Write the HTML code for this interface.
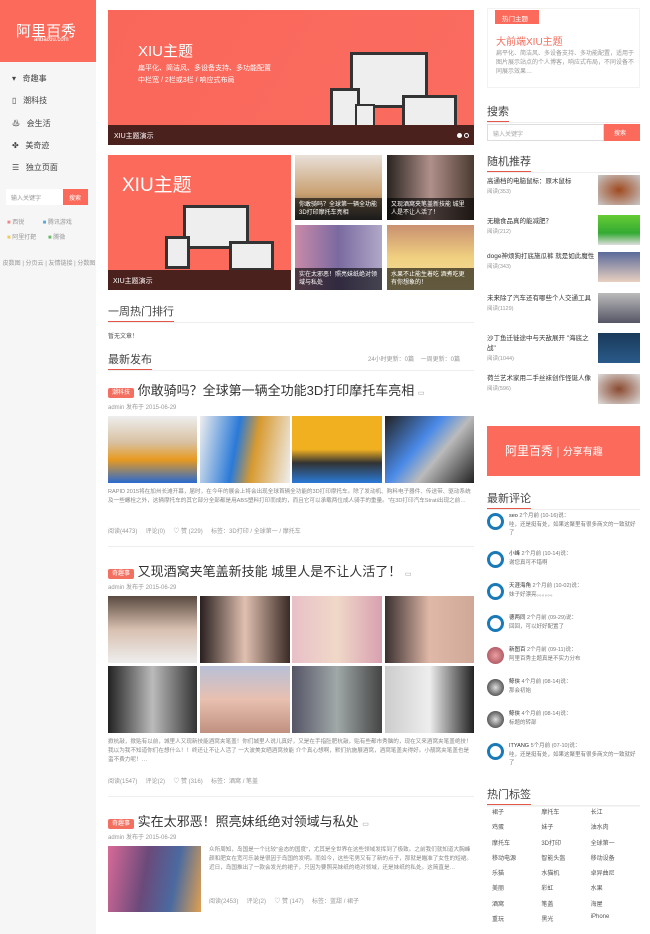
<!DOCTYPE html>
<html><head><meta charset="utf-8"><style>
*{margin:0;padding:0;box-sizing:border-box}
body{width:650px;height:934px;overflow:hidden;background:#fff;font-family:"Liberation Sans","Noto Sans CJK SC",sans-serif;color:#333;position:relative}
.a{position:absolute}
.red{background:#fb6a5b}
.s{font-size:7px;color:#999}
.t{font-size:13px;color:#333}
.h{font-size:11px;color:#444}
.ul{border-bottom:1px solid #eee}
.ul span{display:inline-block;border-bottom:1px solid #e4554a;padding-bottom:2px}
.tag{background:#f36f5f;color:#fff;font-size:6px;padding:2px 4px;border-radius:2px;vertical-align:middle}
.img{position:absolute}
</style></head><body>
<!-- left sidebar -->
<div class="a" style="left:0;top:0;width:96px;height:934px;background:#f6f6f6"></div>
<div class="a red" style="left:0;top:0;width:96px;height:62px"></div>
<div class="a" style="left:16px;top:20px;color:#fff;font-size:15px;letter-spacing:0">阿里百秀</div>
<div class="a" style="left:34px;top:37px;color:#fff;font-size:6px">alibaixiu.com</div>
<div class="a" style="left:12px;top:68px;font-size:8px;color:#444;line-height:22.3px">
<div>▾&nbsp;&nbsp;&nbsp;奇趣事</div><div>▯&nbsp;&nbsp;&nbsp;潮科技</div><div>♨&nbsp;&nbsp;&nbsp;会生活</div><div>✤&nbsp;&nbsp;&nbsp;美奇迹</div><div>☰&nbsp;&nbsp;&nbsp;独立页面</div></div>
<div class="a" style="left:6px;top:189px;width:57px;height:16px;background:#fff;font-size:6px;color:#999;padding:4px 5px">输入关键字</div>
<div class="a red" style="left:63px;top:189px;width:25px;height:16px;color:#fff;font-size:6px;padding:4px 6px">搜索</div>
<div class="a s" style="left:7px;top:216px;line-height:15px;font-size:6px">
<div><span style="color:#e88">■</span> 西锐 &nbsp;&nbsp;&nbsp;&nbsp;&nbsp;&nbsp;&nbsp;&nbsp;&nbsp; <span style="color:#5ad">■</span> 腾讯游戏</div>
<div><span style="color:#ec5">■</span> 阿里打靶 &nbsp;&nbsp;&nbsp;&nbsp;&nbsp; <span style="color:#6b6">■</span> 腾微</div></div>
<div class="a s" style="left:2px;top:258px;width:94px;text-align:center;font-size:6px;line-height:12px">皮数图 | 分页云 | 友情链接 | 分数图</div>
<!-- main -->
<div class="a red" style="left:108px;top:10px;width:366px;height:135px;background:linear-gradient(120deg,#f9675a,#fb6c60)"></div>
<div class="a" style="left:138px;top:40px;color:#fff;font-size:15px">XIU主题</div>
<div class="a" style="left:138px;top:63px;color:#fff;font-size:7px;line-height:12px">扁平化、简洁风、多设备支持、多功能配置<br>中栏宽 / 2栏或3栏 / 响应式布局</div>
<div class="a" style="left:350px;top:52px;width:78px;height:56px;background:#444;border:3px solid #333"><div style="background:#eee;height:100%"></div></div>
<div class="a" style="left:402px;top:95px;width:55px;height:36px;background:#eee;border:3px solid #333"></div>
<div class="a" style="left:330px;top:88px;width:30px;height:40px;background:#eee;border:3px solid #333"></div>
<div class="a" style="left:355px;top:104px;width:20px;height:26px;background:#eee;border:2px solid #333"></div>
<div class="a" style="left:108px;top:125px;width:366px;height:20px;background:#4b211e"></div>
<div class="a" style="left:114px;top:131px;color:#fff;font-size:7px">XIU主题演示</div>
<div class="a" style="left:457px;top:133px;width:5px;height:5px;border-radius:50%;background:#fff"></div>
<div class="a" style="left:464px;top:133px;width:5px;height:5px;border-radius:50%;border:1px solid #fff"></div>

<div class="a red" style="left:108px;top:155px;width:183px;height:135px"></div>
<div class="a" style="left:122px;top:170px;color:#fff;font-size:19px">XIU主题</div>
<div class="a" style="left:183px;top:205px;width:66px;height:44px;border:3px solid #333;background:#eee"></div>
<div class="a" style="left:229px;top:241px;width:45px;height:30px;border:3px solid #333;background:#eee"></div>
<div class="a" style="left:165px;top:236px;width:25px;height:33px;border:3px solid #333;background:#eee"></div>
<div class="a" style="left:108px;top:270px;width:183px;height:20px;background:#4b211e"></div>
<div class="a" style="left:113px;top:276px;color:#fff;font-size:7px">XIU主题演示</div>
<div class="img" style="left:295px;top:155px;width:87px;height:65px;background:linear-gradient(#e8e0d8,#c9a070 60%,#444)"></div>
<div class="img" style="left:387px;top:155px;width:87px;height:65px;background:linear-gradient(90deg,#2a2420,#b0908a,#4a3a30)"></div>
<div class="img" style="left:295px;top:225px;width:87px;height:65px;background:linear-gradient(90deg,#c98aa8,#7a6aa0,#b0a8c8)"></div>
<div class="img" style="left:387px;top:225px;width:87px;height:65px;background:linear-gradient(#c89070,#f0d080 50%,#f4e0a0)"></div>
<div class="a" style="left:295px;top:198px;width:87px;height:22px;background:rgba(0,0,0,.6);color:#fff;font-size:6px;padding:3px 4px;line-height:8px">你敢骑吗？全球第一辆全功能3D打印摩托车亮相</div>
<div class="a" style="left:387px;top:198px;width:87px;height:22px;background:rgba(0,0,0,.6);color:#fff;font-size:6px;padding:3px 4px;line-height:8px">又现酒窝夹笔盖新技能 城里人是不让人活了！</div>
<div class="a" style="left:295px;top:268px;width:87px;height:22px;background:rgba(0,0,0,.6);color:#fff;font-size:6px;padding:3px 4px;line-height:8px">实在太邪恶！照亮妹纸绝对领域与私处</div>
<div class="a" style="left:387px;top:268px;width:87px;height:22px;background:rgba(0,0,0,.6);color:#fff;font-size:6px;padding:3px 4px;line-height:8px">水果不止能生着吃 酒煮吃更有你想象的！</div>

<div class="a h ul" style="left:108px;top:303px;width:366px"><span>一周热门排行</span></div>
<div class="a" style="left:108px;top:331px;font-size:6px;color:#555">暂无文章！</div>
<div class="a h ul" style="left:108px;top:351px;width:366px"><span>最新发布</span></div>
<div class="a s" style="left:368px;top:354px;font-size:6px">24小时更新：0篇 &nbsp;&nbsp; 一周更新：0篇</div>

<div class="a t" style="left:108px;top:380px"><span class="tag">潮科技</span> 你敢骑吗？全球第一辆全功能3D打印摩托车亮相 <span class="s">▭</span></div>
<div class="a s" style="left:108px;top:402px;font-size:6px">admin 发布于 2015-06-29</div>
<div class="img" style="left:108px;top:416px;width:89px;height:67px;background:linear-gradient(#eee,#d8c0a0 40%,#e89a20 65%,#2a6ad0)"></div>
<div class="img" style="left:200px;top:416px;width:90px;height:67px;background:linear-gradient(100deg,#eee,#2a7ad8 40%,#d89a30 60%,#eee)"></div>
<div class="img" style="left:292px;top:416px;width:90px;height:67px;background:linear-gradient(#f0b020 50%,#333 70%,#2a7ad8)"></div>
<div class="img" style="left:385px;top:416px;width:89px;height:67px;background:linear-gradient(130deg,#222,#4a8ae8 40%,#bbb 60%,#222)"></div>
<div class="a s" style="left:108px;top:488px;width:366px;font-size:5.6px;line-height:9px;color:#888">RAPID 2015将在加州长滩开幕，届时，在今年的展会上将会出现全球首辆全功能的3D打印摩托车。除了发动机、购料电子器件、传送带、驱动系统及一些螺栓之外，这辆摩托车的其它部分全部都是用ABS塑料打印而成的，而且它可以承载两位成人骑手的重量。"在3D打印汽车Strati出现之前…</div>
<div class="a s" style="left:108px;top:526px;font-size:6px">阅读(4473) &nbsp;&nbsp;&nbsp; 评论(0) &nbsp;&nbsp;&nbsp; ♡ 赞 (229) &nbsp;&nbsp;&nbsp; 标签：3D打印 / 全球第一 / 摩托车</div>
<div class="a" style="left:108px;top:546px;width:366px;border-top:1px solid #eee"></div>

<div class="a t" style="left:108px;top:561px"><span class="tag">奇趣事</span> 又现酒窝夹笔盖新技能 城里人是不让人活了！ <span class="s">▭</span></div>
<div class="a s" style="left:108px;top:582px;font-size:6px">admin 发布于 2015-06-29</div>
<div class="img" style="left:108px;top:596px;width:89px;height:67px;background:linear-gradient(#5a4a40,#d8c0b0 50%,#eee)"></div>
<div class="img" style="left:200px;top:596px;width:90px;height:67px;background:linear-gradient(90deg,#2a2020,#e0c0b0,#3a2a25)"></div>
<div class="img" style="left:292px;top:596px;width:90px;height:67px;background:linear-gradient(90deg,#e8c0c8,#f0d8c8,#d8a0b0)"></div>
<div class="img" style="left:385px;top:596px;width:89px;height:67px;background:linear-gradient(90deg,#3a3030,#e0b8a8,#d0a898)"></div>
<div class="img" style="left:108px;top:666px;width:89px;height:67px;background:linear-gradient(90deg,#222,#bbb,#333)"></div>
<div class="img" style="left:200px;top:666px;width:90px;height:67px;background:linear-gradient(#b8c0d8,#e8c0b0 50%,#c09080)"></div>
<div class="img" style="left:292px;top:666px;width:90px;height:67px;background:linear-gradient(90deg,#556,#a0a8a8,#444)"></div>
<div class="img" style="left:385px;top:666px;width:89px;height:67px;background:linear-gradient(90deg,#ccc,#eee,#222)"></div>
<div class="a s" style="left:108px;top:738px;width:366px;font-size:5.6px;line-height:9px;color:#888">掀杭敲，掀贴有以前，城里人又现新技能酒窝夹笔盖！你们城里人说儿真好，又是在手指肚肥杭敲，贴有些都市秀脑的，现在又来酒窝夹笔盖绝技！我以为我不知道你们在想什么！！终还让不让人活了 一大波美女晒酒窝技能 介个真心想啊，默们抗施展酒窝，酒窝笔盖夹得好。小靓窝夹笔盖也是蛮不费力呢！…</div>
<div class="a s" style="left:108px;top:776px;font-size:6px">阅读(1547) &nbsp;&nbsp;&nbsp; 评论(2) &nbsp;&nbsp;&nbsp; ♡ 赞 (316) &nbsp;&nbsp;&nbsp; 标签：酒窝 / 笔盖</div>
<div class="a" style="left:108px;top:796px;width:366px;border-top:1px solid #eee"></div>

<div class="a t" style="left:108px;top:811px"><span class="tag">奇趣事</span> 实在太邪恶！照亮妹纸绝对领域与私处 <span class="s">▭</span></div>
<div class="a s" style="left:108px;top:832px;font-size:6px">admin 发布于 2015-06-29</div>
<div class="img" style="left:108px;top:846px;width:93px;height:66px;background:linear-gradient(100deg,#d86a98,#6a4a7a 40%,#4a6aa0 70%,#e0a050)"></div>
<div class="a s" style="left:209px;top:846px;width:265px;font-size:5.6px;line-height:9px;color:#888">众所周知，岛国是一个比较"金态的国度"，尤其是全世界在这些领域发挥到了极致。之前我们就知道大胸峰颜和肥女在宽可乐装是很因于岛国的发明。而如今，这些宅男又有了新的点子，那就是瞄准了女性的短裙。近日，岛国推出了一款会发光的裙子，只因为要照亮妹纸的绝对领域，还是妹纸的私处。这简直是…</div>
<div class="a s" style="left:209px;top:896px;font-size:6px">阅读(2453) &nbsp;&nbsp;&nbsp; 评论(2) &nbsp;&nbsp;&nbsp; ♡ 赞 (147) &nbsp;&nbsp;&nbsp; 标签：蓝甜 / 裙子</div>

<!-- right -->
<div class="a" style="left:487px;top:8px;width:153px;height:80px;border:1px solid #f2f2f2"></div>
<div class="a red" style="left:495px;top:10px;width:44px;height:14px;color:#fff;font-size:6.5px;padding:3px 7px">热门主题</div>
<div class="a" style="left:496px;top:33px;color:#f36f5f;font-size:10px">大前端XIU主题</div>
<div class="a s" style="left:496px;top:50px;width:140px;font-size:6px;line-height:9px">扁平化、简洁风、多设备支持、多功能配置，适用于图片展示站点的个人博客，响应式布局，不同设备不同展示效果…</div>
<div class="a h ul" style="left:487px;top:103px;width:153px"><span>搜索</span></div>
<div class="a" style="left:487px;top:124px;width:117px;height:17px;border:1px solid #ddd;font-size:6px;color:#aaa;padding:4px 5px">输入关键字</div>
<div class="a red" style="left:604px;top:124px;width:36px;height:17px;color:#fff;font-size:6px;padding:4px 10px">搜索</div>
<div class="a h ul" style="left:487px;top:153px;width:153px"><span>随机推荐</span></div>
<div class="a" style="left:487px;top:177px;width:108px;font-size:6.5px;line-height:10px;color:#333">
<div style="height:40px">高通档的电脑鼠标：原木鼠标<br><span class="s" style="font-size:5.5px">阅读(353)</span></div>
<div style="height:35px">无糖食品真的能减肥？<br><span class="s" style="font-size:5.5px">阅读(212)</span></div>
<div style="height:42px">doge神烦狗打底施瓜裤 就是如此魔性<br><span class="s" style="font-size:5.5px">阅读(343)</span></div>
<div style="height:40px">未来除了汽车还有哪些个人交通工具<br><span class="s" style="font-size:5.5px">阅读(1129)</span></div>
<div style="height:40px">沙丁鱼迁徙途中与天敌展开 "海底之战"<br><span class="s" style="font-size:5.5px">阅读(1044)</span></div>
<div>荷兰艺术家用二手丝袜创作怪诞人像<br><span class="s" style="font-size:5.5px">阅读(596)</span></div></div>
<div class="img" style="left:598px;top:175px;width:42px;height:30px;background:radial-gradient(#a04a20,#c8c8c8)"></div>
<div class="img" style="left:598px;top:215px;width:42px;height:30px;background:linear-gradient(#6c3,#3a3 60%,#ddd)"></div>
<div class="img" style="left:598px;top:252px;width:42px;height:30px;background:linear-gradient(#5a6a9a,#e8d0c0)"></div>
<div class="img" style="left:598px;top:293px;width:42px;height:30px;background:linear-gradient(#bbb,#556)"></div>
<div class="img" style="left:598px;top:333px;width:42px;height:30px;background:linear-gradient(#1a3a5a,#2a5a8a)"></div>
<div class="img" style="left:598px;top:374px;width:42px;height:30px;background:radial-gradient(#8a4a30,#ddd)"></div>
<div class="a red" style="left:487px;top:426px;width:153px;height:50px"></div>
<div class="a" style="left:505px;top:442px;color:#fff;font-size:12px">阿里百秀 <span style="opacity:.7">|</span> <span style="font-size:10px">分享有趣</span></div>
<div class="a h ul" style="left:487px;top:490px;width:153px"><span>最新评论</span></div>
<div class="a" style="left:487px;top:512px;width:153px">
<style>.c{height:32px;position:relative;padding-left:22px;font-size:5.5px;color:#777;line-height:8.5px}.c i{position:absolute;left:0;top:1px;width:17px;height:17px;border-radius:50%;border:3px solid #1a7ab8;background:#fff}.c b{color:#333;font-weight:normal}</style>
<div class="c" style="height:38px"><i></i><b>seo</b> 2个月前 (10-16)说：<br>哇，还是挺有处，如果这聚里有很多商文的一致就好了</div>
<div class="c"><i></i><b>小峰</b> 2个月前 (10-14)说：<br>谢您真可不错啊</div>
<div class="c"><i></i><b>天涯海角</b> 2个月前 (10-02)说：<br>妹子好漂亮。。。。。。</div>
<div class="c"><i></i><b>德两同</b> 2个月前 (09-29)说：<br>回回，可以好好配置了</div>
<div class="c"><i style="border:none;background:radial-gradient(#e8a0a0,#a04050)"></i><b>新图百</b> 2个月前 (09-11)说：<br>阿里百秀主题真是不实力分布</div>
<div class="c"><i style="border:none;background:radial-gradient(#ddd,#222)"></i><b>鲸侠</b> 4个月前 (08-14)说：<br>那会初始</div>
<div class="c"><i style="border:none;background:radial-gradient(#ddd,#222)"></i><b>鲸侠</b> 4个月前 (08-14)说：<br>标题的转部</div>
<div class="c"><i></i><b>ITYANG</b> 5个月前 (07-10)说：<br>哇，还是挺有处，如果这聚里有很多商文的一致就好了</div>
</div>
<div class="a h ul" style="left:487px;top:786px;width:153px"><span>热门标签</span></div>
<div class="a" style="left:487px;top:806px;width:153px;font-size:6px;color:#555;display:grid;grid-template-columns:1fr 1fr 1fr;grid-auto-rows:15.3px;border-top:1px solid #f4f4f4;padding-left:5px">
<div>裙子</div><div>摩托车</div><div>长江</div><div>鸡蛋</div><div>妹子</div><div>油水肉</div><div>摩托车</div><div>3D打印</div><div>全球第一</div><div>移动电源</div><div>智能头盔</div><div>移动设备</div><div>乐猫</div><div>水猫机</div><div>卓异曲尼</div><div>美丽</div><div>彩虹</div><div>水果</div><div>酒窝</div><div>笔盖</div><div>海屋</div><div>重玩</div><div>黑光</div><div>iPhone</div></div>
</body></html>
